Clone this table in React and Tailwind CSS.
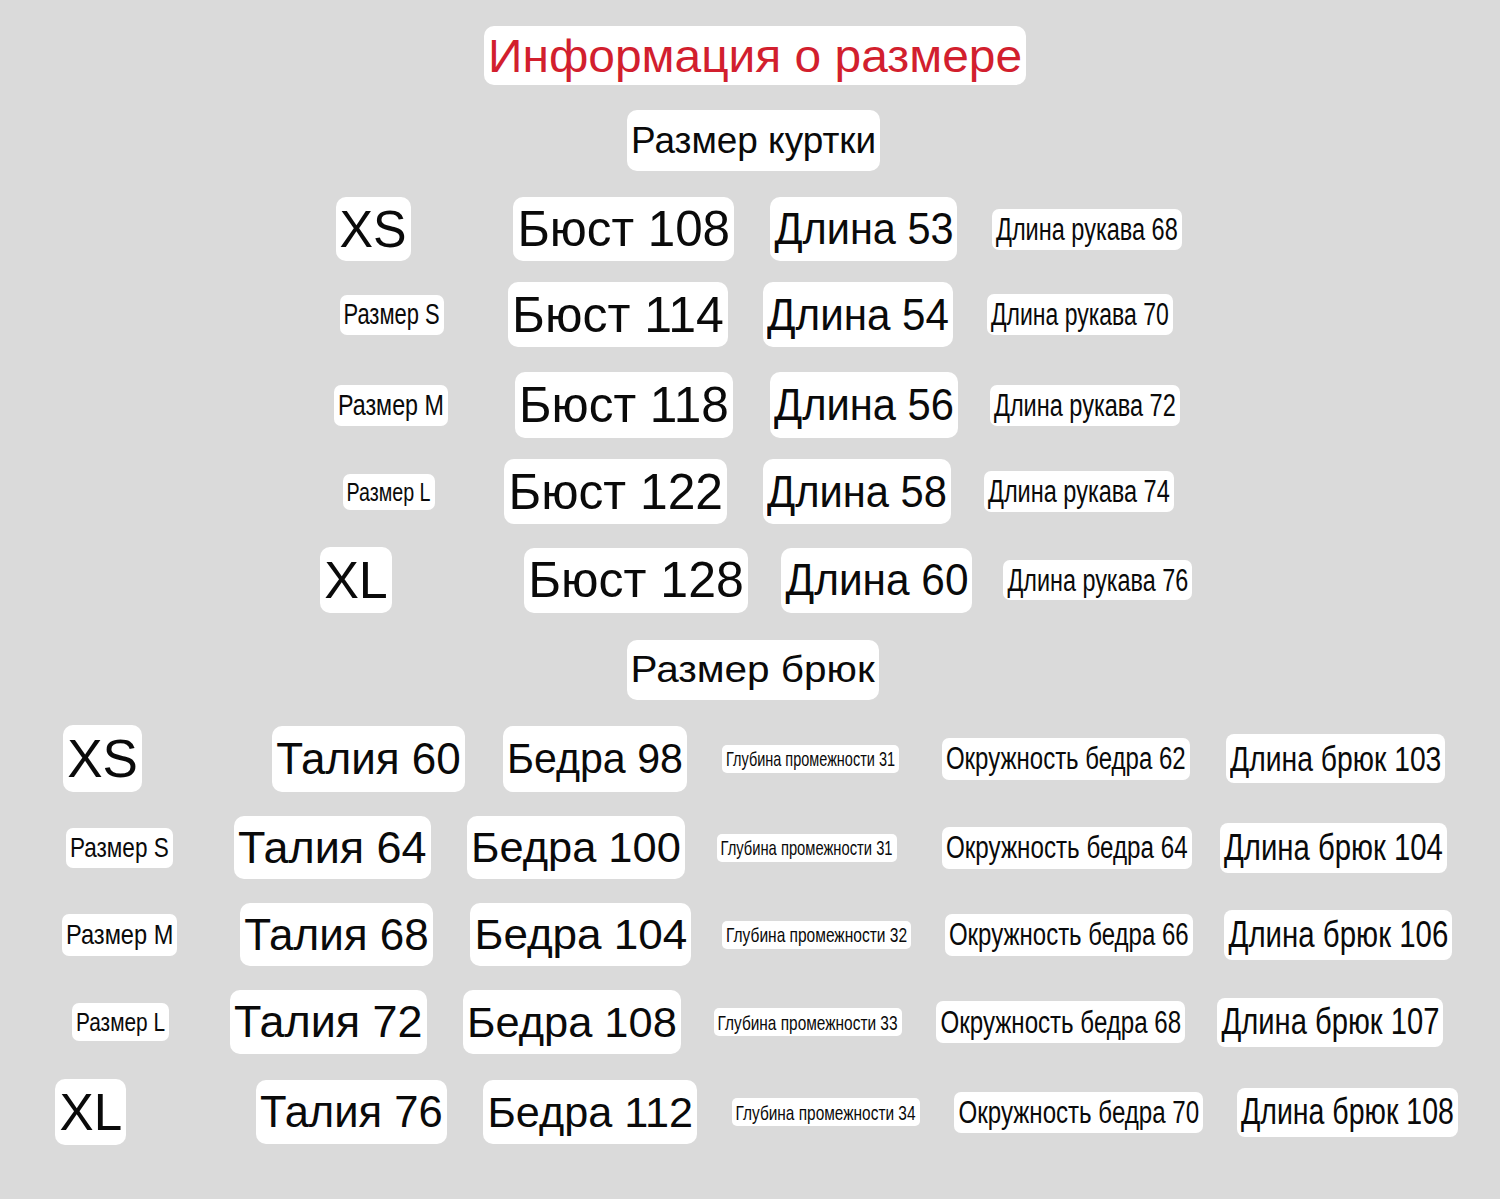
import { useLayoutEffect, useRef, useState } from "react";

function Fit({ children }) {
  const ref = useRef(null);
  const [s, setS] = useState(1);
  useLayoutEffect(() => {
    const measure = () => {
      const el = ref.current;
      if (!el) return;
      const avail = el.parentElement.clientWidth - 8;
      const nat = el.offsetWidth;
      if (nat > 0) setS(avail / nat);
    };
    measure();
    if (document.fonts && document.fonts.ready) document.fonts.ready.then(measure);
  }, []);
  return (
    <span
      ref={ref}
      className="inline-block shrink-0 whitespace-nowrap"
      style={{ transform: `scaleX(${s})` }}
    >
      {children}
    </span>
  );
}

function Label({ c, t }) {
  return (
    <div className={"flex shrink-0 items-center justify-center bg-white leading-none " + c}>
      <Fit>{t}</Fit>
    </div>
  );
}

const rows = [
  {
    r: "mt-[26px] h-[59px]",
    items: [
      { c: "ml-[484px] w-[542px] h-[59px] text-[47px] rounded-[10px] text-[#d21f2e]", t: "Информация о размере" },
    ],
  },
  {
    r: "mt-[25px] h-[61px]",
    items: [{ c: "ml-[627px] w-[253px] h-[61px] text-[36px] rounded-[10px]", t: "Размер куртки" }],
  },
  {
    r: "mt-[26px] h-[64px]",
    items: [
      { c: "ml-[336px] w-[75px] h-[64px] text-[51px] rounded-[10px]", t: "XS" },
      { c: "ml-[102px] w-[221px] h-[64px] text-[50px] rounded-[10px]", t: "Бюст 108" },
      { c: "ml-[36px] w-[187px] h-[64px] text-[44px] rounded-[10px]", t: "Длина 53" },
      { c: "ml-[35px] w-[190px] h-[41px] text-[31px] rounded-[7px]", t: "Длина рукава 68" },
    ],
  },
  {
    r: "mt-[21px] h-[65px]",
    items: [
      { c: "ml-[340px] w-[104px] h-[40px] text-[29px] rounded-[7px]", t: "Размер S" },
      { c: "ml-[64px] w-[220px] h-[65px] text-[50px] rounded-[10px]", t: "Бюст 114" },
      { c: "ml-[35px] w-[190px] h-[65px] text-[44px] rounded-[10px]", t: "Длина 54" },
      { c: "ml-[34px] w-[186px] h-[41px] text-[31px] rounded-[7px]", t: "Длина рукава 70" },
    ],
  },
  {
    r: "mt-[25px] h-[66px]",
    items: [
      { c: "ml-[334px] w-[114px] h-[41px] text-[29px] rounded-[7px]", t: "Размер M" },
      { c: "ml-[67px] w-[218px] h-[66px] text-[50px] rounded-[10px]", t: "Бюст 118" },
      { c: "ml-[37px] w-[188px] h-[66px] text-[44px] rounded-[10px]", t: "Длина 56" },
      { c: "ml-[32px] w-[190px] h-[41px] text-[31px] rounded-[7px]", t: "Длина рукава 72" },
    ],
  },
  {
    r: "mt-[21px] h-[65px]",
    items: [
      { c: "ml-[343px] w-[92px] h-[36px] text-[26px] rounded-[7px]", t: "Размер L" },
      { c: "ml-[69px] w-[223px] h-[65px] text-[50px] rounded-[10px]", t: "Бюст 122" },
      { c: "ml-[36px] w-[188px] h-[65px] text-[44px] rounded-[10px]", t: "Длина 58" },
      { c: "ml-[33px] w-[190px] h-[41px] text-[31px] rounded-[7px]", t: "Длина рукава 74" },
    ],
  },
  {
    r: "mt-[23px] h-[66px]",
    items: [
      { c: "ml-[320px] w-[72px] h-[66px] text-[52px] rounded-[10px]", t: "XL" },
      { c: "ml-[132px] w-[224px] h-[65px] text-[50px] rounded-[10px]", t: "Бюст 128" },
      { c: "ml-[33px] w-[191px] h-[65px] text-[44px] rounded-[10px]", t: "Длина 60" },
      { c: "ml-[31px] w-[189px] h-[40px] text-[31px] rounded-[7px]", t: "Длина рукава 76" },
    ],
  },
  {
    r: "mt-[27px] h-[60px]",
    items: [{ c: "ml-[627px] w-[252px] h-[60px] text-[36px] rounded-[10px]", t: "Размер брюк" }],
  },
  {
    r: "mt-[25px] h-[67px]",
    items: [
      { c: "ml-[63px] w-[79px] h-[67px] text-[53px] rounded-[10px]", t: "XS" },
      { c: "ml-[130px] w-[193px] h-[66px] text-[44px] rounded-[10px]", t: "Талия 60" },
      { c: "ml-[38px] w-[184px] h-[66px] text-[43px] rounded-[10px]", t: "Бедра 98" },
      { c: "ml-[35px] w-[177px] h-[28px] text-[21px] rounded-[5px]", t: "Глубина промежности 31" },
      { c: "ml-[43px] w-[248px] h-[42px] text-[31px] rounded-[7px]", t: "Окружность бедра 62" },
      { c: "ml-[36px] w-[219px] h-[49px] text-[35px] rounded-[8px]", t: "Длина брюк 103" },
    ],
  },
  {
    r: "mt-[24px] h-[63px]",
    items: [
      { c: "ml-[66px] w-[107px] h-[40px] text-[28px] rounded-[7px]", t: "Размер S" },
      { c: "ml-[61px] w-[197px] h-[63px] text-[44px] rounded-[10px]", t: "Талия 64" },
      { c: "ml-[36px] w-[218px] h-[63px] text-[43px] rounded-[10px]", t: "Бедра 100" },
      { c: "ml-[32px] w-[180px] h-[28px] text-[21px] rounded-[5px]", t: "Глубина промежности 31" },
      { c: "ml-[45px] w-[250px] h-[42px] text-[31px] rounded-[7px]", t: "Окружность бедра 64" },
      { c: "ml-[28px] w-[227px] h-[50px] text-[36px] rounded-[8px]", t: "Длина брюк 104" },
    ],
  },
  {
    r: "mt-[24px] h-[63px]",
    items: [
      { c: "ml-[62px] w-[115px] h-[42px] text-[28px] rounded-[7px]", t: "Размер M" },
      { c: "ml-[63px] w-[193px] h-[63px] text-[44px] rounded-[10px]", t: "Талия 68" },
      { c: "ml-[37px] w-[221px] h-[63px] text-[43px] rounded-[10px]", t: "Бедра 104" },
      { c: "ml-[31px] w-[189px] h-[28px] text-[21px] rounded-[5px]", t: "Глубина промежности 32" },
      { c: "ml-[34px] w-[248px] h-[42px] text-[31px] rounded-[7px]", t: "Окружность бедра 66" },
      { c: "ml-[31px] w-[228px] h-[50px] text-[36px] rounded-[8px]", t: "Длина брюк 106" },
    ],
  },
  {
    r: "mt-[24px] h-[64px]",
    items: [
      { c: "ml-[72px] w-[97px] h-[38px] text-[26px] rounded-[7px]", t: "Размер L" },
      { c: "ml-[61px] w-[197px] h-[64px] text-[44px] rounded-[10px]", t: "Талия 72" },
      { c: "ml-[36px] w-[218px] h-[64px] text-[43px] rounded-[10px]", t: "Бедра 108" },
      { c: "ml-[33px] w-[188px] h-[28px] text-[21px] rounded-[5px]", t: "Глубина промежности 33" },
      { c: "ml-[34px] w-[249px] h-[42px] text-[31px] rounded-[7px]", t: "Окружность бедра 68" },
      { c: "ml-[32px] w-[226px] h-[49px] text-[36px] rounded-[8px]", t: "Длина брюк 107" },
    ],
  },
  {
    r: "mt-[25px] h-[66px]",
    items: [
      { c: "ml-[55px] w-[71px] h-[66px] text-[52px] rounded-[10px]", t: "XL" },
      { c: "ml-[130px] w-[191px] h-[64px] text-[44px] rounded-[10px]", t: "Талия 76" },
      { c: "ml-[36px] w-[214px] h-[64px] text-[43px] rounded-[10px]", t: "Бедра 112" },
      { c: "ml-[35px] w-[188px] h-[28px] text-[21px] rounded-[5px]", t: "Глубина промежности 34" },
      { c: "ml-[34px] w-[249px] h-[41px] text-[31px] rounded-[7px]", t: "Окружность бедра 70" },
      { c: "ml-[34px] w-[221px] h-[49px] text-[36px] rounded-[8px]", t: "Длина брюк 108" },
    ],
  },
];

export default function App() {
  return (
    <div className="flex h-[1199px] w-[1500px] flex-col overflow-hidden bg-[#dadada] font-['Liberation_Sans',Arial,sans-serif] text-[#0a0a0a]">
      {rows.map((row, i) => (
        <div key={i} className={"flex shrink-0 items-center " + row.r}>
          {row.items.map((it, j) => (
            <Label key={j} c={it.c} t={it.t} />
          ))}
        </div>
      ))}
    </div>
  );
}
